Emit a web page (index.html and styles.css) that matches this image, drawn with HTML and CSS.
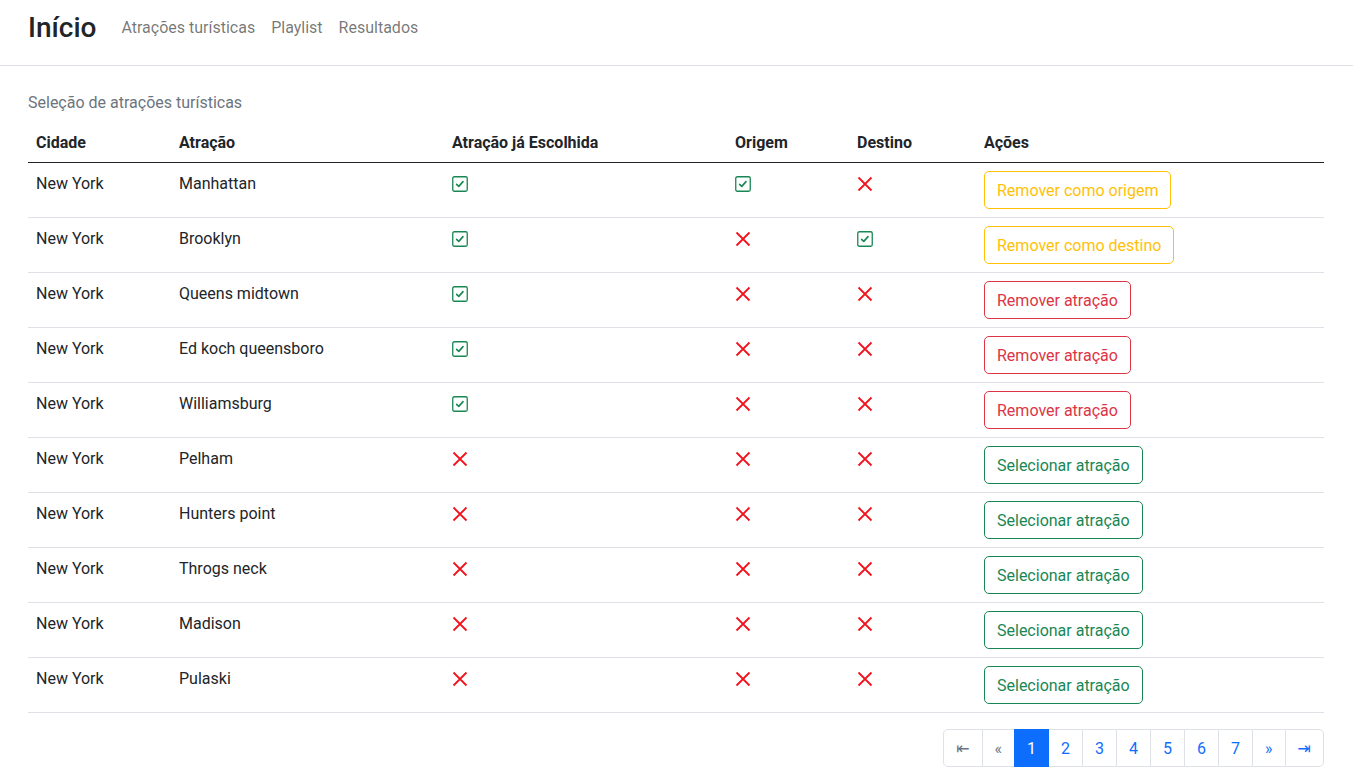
FILE: index.html
```html
<!DOCTYPE html>
<html lang="pt">
<head>
<meta charset="utf-8">
<title>Início</title>
<link rel="stylesheet" href="styles.css">
</head>
<body>
<nav class="navbar">
  <a class="brand" href="#">Início</a>
  <ul class="nav">
    <li><a class="nav-link" href="#">Atrações turísticas</a></li>
    <li><a class="nav-link" href="#">Playlist</a></li>
    <li><a class="nav-link" href="#">Resultados</a></li>
  </ul>
</nav>
<main class="content">
  <table class="table">
    <caption>Seleção de atrações turísticas</caption>
    <colgroup>
      <col class="c1"><col class="c2"><col class="c3"><col class="c4"><col class="c5"><col class="c6">
    </colgroup>
    <thead>
      <tr><th>Cidade</th><th>Atração</th><th>Atração já Escolhida</th><th>Origem</th><th>Destino</th><th>Ações</th></tr>
    </thead>
    <tbody>
      <tr><td>New York</td><td>Manhattan</td>
        <td><svg class="ic ok" viewBox="0 0 16 16"><rect x="0.75" y="0.75" width="14.5" height="14.5" rx="1.5"/><path d="M4.6 8.3l2.2 2.1 4.2-4.8"/></svg></td>
        <td><svg class="ic ok" viewBox="0 0 16 16"><rect x="0.75" y="0.75" width="14.5" height="14.5" rx="1.5"/><path d="M4.6 8.3l2.2 2.1 4.2-4.8"/></svg></td>
        <td><svg class="ic no" viewBox="0 0 16 16"><path d="M1.5 1.5l13 13M14.5 1.5l-13 13"/></svg></td>
        <td><button class="btn btn-warning">Remover como origem</button></td></tr>
      <tr><td>New York</td><td>Brooklyn</td>
        <td><svg class="ic ok" viewBox="0 0 16 16"><rect x="0.75" y="0.75" width="14.5" height="14.5" rx="1.5"/><path d="M4.6 8.3l2.2 2.1 4.2-4.8"/></svg></td>
        <td><svg class="ic no" viewBox="0 0 16 16"><path d="M1.5 1.5l13 13M14.5 1.5l-13 13"/></svg></td>
        <td><svg class="ic ok" viewBox="0 0 16 16"><rect x="0.75" y="0.75" width="14.5" height="14.5" rx="1.5"/><path d="M4.6 8.3l2.2 2.1 4.2-4.8"/></svg></td>
        <td><button class="btn btn-warning">Remover como destino</button></td></tr>
      <tr><td>New York</td><td>Queens midtown</td>
        <td><svg class="ic ok" viewBox="0 0 16 16"><rect x="0.75" y="0.75" width="14.5" height="14.5" rx="1.5"/><path d="M4.6 8.3l2.2 2.1 4.2-4.8"/></svg></td>
        <td><svg class="ic no" viewBox="0 0 16 16"><path d="M1.5 1.5l13 13M14.5 1.5l-13 13"/></svg></td>
        <td><svg class="ic no" viewBox="0 0 16 16"><path d="M1.5 1.5l13 13M14.5 1.5l-13 13"/></svg></td>
        <td><button class="btn btn-danger">Remover atração</button></td></tr>
      <tr><td>New York</td><td>Ed koch queensboro</td>
        <td><svg class="ic ok" viewBox="0 0 16 16"><rect x="0.75" y="0.75" width="14.5" height="14.5" rx="1.5"/><path d="M4.6 8.3l2.2 2.1 4.2-4.8"/></svg></td>
        <td><svg class="ic no" viewBox="0 0 16 16"><path d="M1.5 1.5l13 13M14.5 1.5l-13 13"/></svg></td>
        <td><svg class="ic no" viewBox="0 0 16 16"><path d="M1.5 1.5l13 13M14.5 1.5l-13 13"/></svg></td>
        <td><button class="btn btn-danger">Remover atração</button></td></tr>
      <tr><td>New York</td><td>Williamsburg</td>
        <td><svg class="ic ok" viewBox="0 0 16 16"><rect x="0.75" y="0.75" width="14.5" height="14.5" rx="1.5"/><path d="M4.6 8.3l2.2 2.1 4.2-4.8"/></svg></td>
        <td><svg class="ic no" viewBox="0 0 16 16"><path d="M1.5 1.5l13 13M14.5 1.5l-13 13"/></svg></td>
        <td><svg class="ic no" viewBox="0 0 16 16"><path d="M1.5 1.5l13 13M14.5 1.5l-13 13"/></svg></td>
        <td><button class="btn btn-danger">Remover atração</button></td></tr>
      <tr><td>New York</td><td>Pelham</td>
        <td><svg class="ic no" viewBox="0 0 16 16"><path d="M1.5 1.5l13 13M14.5 1.5l-13 13"/></svg></td>
        <td><svg class="ic no" viewBox="0 0 16 16"><path d="M1.5 1.5l13 13M14.5 1.5l-13 13"/></svg></td>
        <td><svg class="ic no" viewBox="0 0 16 16"><path d="M1.5 1.5l13 13M14.5 1.5l-13 13"/></svg></td>
        <td><button class="btn btn-success">Selecionar atração</button></td></tr>
      <tr><td>New York</td><td>Hunters point</td>
        <td><svg class="ic no" viewBox="0 0 16 16"><path d="M1.5 1.5l13 13M14.5 1.5l-13 13"/></svg></td>
        <td><svg class="ic no" viewBox="0 0 16 16"><path d="M1.5 1.5l13 13M14.5 1.5l-13 13"/></svg></td>
        <td><svg class="ic no" viewBox="0 0 16 16"><path d="M1.5 1.5l13 13M14.5 1.5l-13 13"/></svg></td>
        <td><button class="btn btn-success">Selecionar atração</button></td></tr>
      <tr><td>New York</td><td>Throgs neck</td>
        <td><svg class="ic no" viewBox="0 0 16 16"><path d="M1.5 1.5l13 13M14.5 1.5l-13 13"/></svg></td>
        <td><svg class="ic no" viewBox="0 0 16 16"><path d="M1.5 1.5l13 13M14.5 1.5l-13 13"/></svg></td>
        <td><svg class="ic no" viewBox="0 0 16 16"><path d="M1.5 1.5l13 13M14.5 1.5l-13 13"/></svg></td>
        <td><button class="btn btn-success">Selecionar atração</button></td></tr>
      <tr><td>New York</td><td>Madison</td>
        <td><svg class="ic no" viewBox="0 0 16 16"><path d="M1.5 1.5l13 13M14.5 1.5l-13 13"/></svg></td>
        <td><svg class="ic no" viewBox="0 0 16 16"><path d="M1.5 1.5l13 13M14.5 1.5l-13 13"/></svg></td>
        <td><svg class="ic no" viewBox="0 0 16 16"><path d="M1.5 1.5l13 13M14.5 1.5l-13 13"/></svg></td>
        <td><button class="btn btn-success">Selecionar atração</button></td></tr>
      <tr><td>New York</td><td>Pulaski</td>
        <td><svg class="ic no" viewBox="0 0 16 16"><path d="M1.5 1.5l13 13M14.5 1.5l-13 13"/></svg></td>
        <td><svg class="ic no" viewBox="0 0 16 16"><path d="M1.5 1.5l13 13M14.5 1.5l-13 13"/></svg></td>
        <td><svg class="ic no" viewBox="0 0 16 16"><path d="M1.5 1.5l13 13M14.5 1.5l-13 13"/></svg></td>
        <td><button class="btn btn-success">Selecionar atração</button></td></tr>
    </tbody>
  </table>
  <nav class="pager">
    <ul class="pagination">
      <li class="page-item disabled"><span class="page-link">⇤</span></li>
      <li class="page-item disabled"><span class="page-link">«</span></li>
      <li class="page-item active"><span class="page-link">1</span></li>
      <li class="page-item"><a class="page-link" href="#">2</a></li>
      <li class="page-item"><a class="page-link" href="#">3</a></li>
      <li class="page-item"><a class="page-link" href="#">4</a></li>
      <li class="page-item"><a class="page-link" href="#">5</a></li>
      <li class="page-item"><a class="page-link" href="#">6</a></li>
      <li class="page-item"><a class="page-link" href="#">7</a></li>
      <li class="page-item"><a class="page-link" href="#">»</a></li>
      <li class="page-item"><a class="page-link" href="#">⇥</a></li>
    </ul>
  </nav>
</main>
</body>
</html>
```

FILE: styles.css
```css
* { box-sizing: border-box; }
html, body { margin: 0; padding: 0; background: #fff; }
body {
  font-family: Roboto, "Liberation Sans", "DejaVu Sans", sans-serif;
  font-size: 16px;
  line-height: 1.5;
  color: #212529;
}
a { text-decoration: none; }

.navbar {
  display: flex;
  align-items: center;
  height: 66px;
  padding: 7px 28px 17px;
  border-bottom: 1px solid #dee2e6;
}
.brand {
  font-size: 28px;
  line-height: 42px;
  color: #212529;
  font-weight: 500;
  margin-right: 17px;
}
.nav {
  display: flex;
  list-style: none;
  margin: 0;
  padding: 0;
}
.nav-link {
  display: block;
  padding: 0 8px;
  color: rgba(0, 0, 0, 0.55);
}

.content {
  padding: 16px 29px 0 28px;
}

.table {
  width: 100%;
  border-collapse: collapse;
  table-layout: fixed;
  margin-bottom: 16px;
}
.table caption {
  caption-side: top;
  text-align: left;
  color: #6c757d;
  padding: 9px 0 7px;
}
.c1 { width: 143px; }
.c2 { width: 273px; }
.c3 { width: 283px; }
.c4 { width: 122px; }
.c5 { width: 127px; }
.c6 { width: auto; }

.table th, .table td {
  padding: 9px 8px 7px;
  text-align: left;
  vertical-align: top;
  border-bottom: 1px solid #dee2e6;
}
.table thead th {
  font-weight: 700;
  border-bottom: 1px solid #212529;
}

.ic {
  width: 16px;
  height: 16px;
  display: inline-block;
  vertical-align: -3px;
  fill: none;
}
.ic.ok rect { stroke: #198754; stroke-width: 1.3; }
.ic.ok path { stroke: #198754; stroke-width: 1.6; stroke-linecap: round; stroke-linejoin: round; }
.ic.no path { stroke: #f0141e; stroke-width: 1.8; }

.btn {
  font-family: inherit;
  font-size: 16px;
  line-height: 24px;
  padding: 7px 12px 5px;
  margin: -1px 0 1px;
  border-radius: 5px;
  background: #fff;
  border: 1px solid;
  cursor: pointer;
}
.btn-warning { color: #ffc107; border-color: #ffc107; }
.btn-danger { color: #dc3545; border-color: #dc3545; }
.btn-success { color: #198754; border-color: #198754; }

.pager {
  display: flex;
  justify-content: flex-end;
}
.pagination {
  display: flex;
  list-style: none;
  margin: 0;
  padding: 0;
}
.page-item + .page-item { margin-left: -1px; }
.page-link {
  display: block;
  padding: 7px 12px 5px;
  line-height: 24px;
  border: 1px solid #dee2e6;
  color: #0d6efd;
  background: #fff;
}
.page-item:first-child .page-link { border-radius: 5px 0 0 5px; }
.page-item:last-child .page-link { border-radius: 0 5px 5px 0; }
.page-item.disabled .page-link { color: #6c757d; }
.page-item.active .page-link {
  background: #0d6efd;
  border-color: #0d6efd;
  color: #fff;
  position: relative;
  z-index: 1;
}
```
